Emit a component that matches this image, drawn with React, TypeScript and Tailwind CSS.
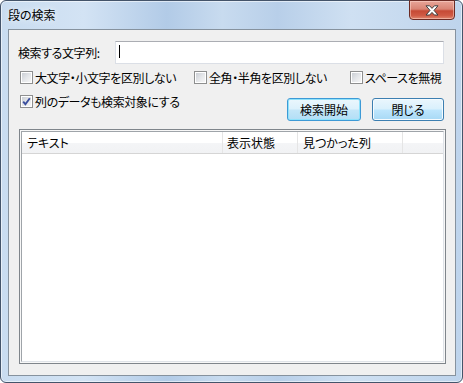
import React from "react";

function Checkbox({ checked }: { checked?: boolean }) {
  return (
    <div className="w-[13px] h-[13px] shrink-0 border border-[#8e8f8f] bg-white p-[1px]">
      <div className="relative w-full h-full bg-[linear-gradient(135deg,#cbcfd5_0%,#e4e6e9_50%,#f6f6f6_100%)]">
        {checked && (
          <svg className="absolute left-[-1px] top-[-1px]" width="11" height="11" viewBox="0 0 11 11">
            <path d="M2.2 5.6 L4.4 8.2 L8.8 2.2" fill="none" stroke="#3b4f9e" strokeWidth="1.9" />
          </svg>
        )}
      </div>
    </div>
  );
}

function CheckItem({ label, checked, w }: { label: string; checked?: boolean; w: string }) {
  return (
    <div className={`flex items-center gap-[2px] h-[13px] ${w}`}>
      <Checkbox checked={checked} />
      <span className="whitespace-nowrap leading-none tracking-[-0.4px]">{label}</span>
    </div>
  );
}

export default function App() {
  return (
    <div className="w-[463px] h-[383px] bg-white font-['Noto_Sans_CJK_JP','Noto_Sans',sans-serif] text-[12px] text-black leading-none [font-feature-settings:'palt']">
      <div className="relative h-full flex flex-col rounded-[6px] border border-[#44546a] bg-[linear-gradient(90deg,#c9dcf0_0%,#d3e3f4_18%,#b2cbe7_36%,#c8dbef_48%,#b8cfe9_60%,#cfe0f2_76%,#bed4ec_100%)] shadow-[inset_0_0_0_1px_rgba(255,255,255,0.55)] pl-[7px] pr-[6px] pb-[6px]">
        {/* title bar */}
        <div className="h-[28px] flex items-center">
          <span className="text-[12px] [text-shadow:0_0_6px_#ffffff]">段の検索</span>
        </div>
        <div className="absolute top-[-1px] right-[7px] w-[46px] h-[20px] rounded-b-[4px] border border-[#6b2a23] bg-[linear-gradient(180deg,#e8a598_0%,#d98474_45%,#c64a35_55%,#cf5a44_80%,#e0876f_100%)] shadow-[inset_0_0_0_1px_rgba(255,220,210,0.5)] flex items-center justify-center">
          <svg width="14" height="11" viewBox="0 0 14 11">
            <path d="M1 0.8 L4.6 0.8 L7 3.4 L9.4 0.8 L13 0.8 L9 5.4 L13 10 L9.4 10 L7 7.4 L4.6 10 L1 10 L5 5.4 Z" fill="#ffffff" stroke="#3e3e3e" strokeWidth="1" strokeLinejoin="round" />
          </svg>
        </div>

        {/* client */}
        <div className="flex-1 flex flex-col border border-[#86929e] bg-[#f0f0f0] pt-[11px] pl-[9px] pr-[11px] pb-[11px]">
          <div className="flex items-center h-[23px]">
            <div className="w-[97px] whitespace-nowrap tracking-[-0.4px]">検索する文字列:</div>
            <div className="relative w-[329px] h-[23px] border border-[#dbdfe6] border-t-[#abadb3] bg-white">
              <div className="absolute left-[3px] top-[3px] w-[1px] h-[13px] bg-black" />
            </div>
          </div>

          <div className="flex items-center mt-[7px] pl-[2px]">
            <CheckItem w="w-[174px]" label="大文字・小文字を区別しない" />
            <CheckItem w="w-[156px]" label="全角・半角を区別しない" />
            <CheckItem w="w-auto" label="スペースを無視" />
          </div>

          <div className="flex items-start justify-between mt-[11px] pl-[2px] h-[26px]">
            <CheckItem w="w-auto" checked label="列のデータも検索対象にする" />
            <div className="flex gap-[11px] mt-[3px]">
              <button className="w-[74px] h-[23px] rounded-[3px] border border-[#3d9ad6] shadow-[inset_0_0_0_1px_#8fe2fb] bg-[linear-gradient(180deg,#ebf7fd_0%,#dcf1fc_48%,#c4e6f8_52%,#b2def6_100%)] flex items-center justify-center">
                検索開始
              </button>
              <button className="w-[72px] h-[23px] rounded-[3px] border border-[#3c7fb1] shadow-[inset_0_0_0_1px_#f6fbfe] bg-[linear-gradient(180deg,#eaf6fd_0%,#d9f0fc_48%,#bee6fd_52%,#a7d9f5_100%)] flex items-center justify-center">
                閉じる
              </button>
            </div>
          </div>

          <div className="flex-1 mt-[8px] ml-[1px] mr-[-2px] border border-[#7f858b] bg-[#f7f7f7] p-[1px] flex flex-col">
            <div className="flex-1 flex flex-col border border-[#9fa4a9] border-r-[#dfe3e8] border-b-[#dfe3e8] bg-white">
              <div className="flex h-[22px] border-b border-[#d5d5d5] bg-[linear-gradient(180deg,#ffffff_0%,#ffffff_50%,#f4f5f7_51%,#f1f2f4_100%)]">
                <div className="w-[201px] border-r border-[#e5e5e5] flex items-center pl-[5px]">テキスト</div>
                <div className="w-[75px] border-r border-[#e5e5e5] flex items-center pl-[4px]">表示状態</div>
                <div className="w-[105px] border-r border-[#e5e5e5] flex items-center pl-[5px]">見つかった列</div>
                <div className="flex-1" />
              </div>
              <div className="flex-1" />
            </div>
          </div>
        </div>
      </div>
    </div>
  );
}
